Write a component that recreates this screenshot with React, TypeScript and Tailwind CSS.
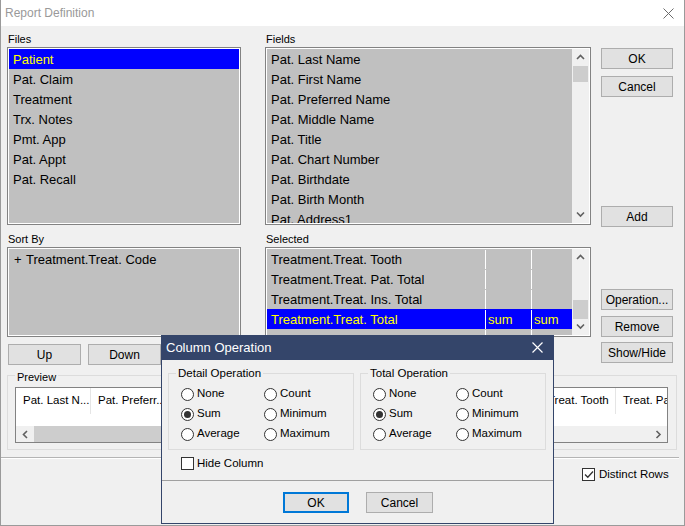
import React from "react";

const files = ["Patient", "Pat. Claim", "Treatment", "Trx. Notes", "Pmt. App", "Pat. Appt", "Pat. Recall"];

const fields = [
	"Pat. Last Name",
	"Pat. First Name",
	"Pat. Preferred Name",
	"Pat. Middle Name",
	"Pat. Title",
	"Pat. Chart Number",
	"Pat. Birthdate",
	"Pat. Birth Month",
	"Pat. Address1",
];

const selected = [
	{ name: "Treatment.Treat. Tooth", detail: "", total: "" },
	{ name: "Treatment.Treat. Pat. Total", detail: "", total: "" },
	{ name: "Treatment.Treat. Ins. Total", detail: "", total: "" },
	{ name: "Treatment.Treat. Total", detail: "sum", total: "sum", active: true },
	{ name: "", detail: "", total: "" },
];

// columns under the dialog are left blank, only the visible ones carry text
const previewCols = [
	{ label: "Pat. Last N...", w: 75 },
	{ label: "Pat. Preferr...", w: 90 },
	{ label: "", w: 90 },
	{ label: "", w: 90 },
	{ label: "", w: 90 },
	{ label: "", w: 90 },
	{ label: "Treat. Tooth", w: 75 },
	{ label: "Treat. Pat. Total", w: 90 },
];

function Chevron({ dir }: { dir: "up" | "down" | "left" | "right" }) {
	const d = {
		up: "M1 5 L4.5 1.5 L8 5",
		down: "M1 1.5 L4.5 5 L8 1.5",
		left: "M5 1 L1.5 4.5 L5 8",
		right: "M1.5 1 L5 4.5 L1.5 8",
	}[dir];
	const vertical = dir === "up" || dir === "down";
	return (
		<svg width={vertical ? 9 : 7} height={vertical ? 7 : 9} viewBox={vertical ? "0 0 9 7" : "0 0 7 9"}>
			<path d={d} fill="none" stroke="#606060" strokeWidth="1.6" />
		</svg>
	);
}

function Btn({ children, className = "" }: { children: React.ReactNode; className?: string }) {
	return (
		<button className={`flex h-[21px] w-[72px] items-center justify-center border border-[#adadad] bg-[#e1e1e1] text-[12px] leading-none ${className}`}>
			{children}
		</button>
	);
}

function Label({ children }: { children: React.ReactNode }) {
	return <div className="h-[15px] pl-px text-[11px] leading-[15px]">{children}</div>;
}

function VScroll({ thumbTop, thumbH }: { thumbTop: number; thumbH: number }) {
	return (
		<div className="relative flex w-[17px] flex-col items-center justify-between bg-[#f0f0f0] py-[5px]">
			<Chevron dir="up" />
			<div className="absolute left-px w-[15px] bg-[#cdcdcd]" style={{ top: thumbTop, height: thumbH }} />
			<Chevron dir="down" />
		</div>
	);
}

function Radio({ label, checked }: { label: string; checked?: boolean }) {
	return (
		<div className="flex h-[20px] items-center">
			<span className="flex h-[13px] w-[13px] items-center justify-center rounded-full border border-[#333333] bg-white">
				{checked && <span className="h-[7px] w-[7px] rounded-full bg-[#333333]" />}
			</span>
			<span className="ml-[3px]">{label}</span>
		</div>
	);
}

function OpGroup({ title }: { title: string }) {
	return (
		<div className="relative h-[77px] w-[186px] border border-[#dcdcdc] pl-[12px] pt-[10px]">
			<span className="absolute -top-[7px] left-[7px] bg-[#f0f0f0] px-[2px] leading-[13px]">{title}</span>
			<div className="grid grid-cols-[83px_1fr]">
				<Radio label="None" />
				<Radio label="Count" />
				<Radio label="Sum" checked />
				<Radio label="Minimum" />
				<Radio label="Average" />
				<Radio label="Maximum" />
			</div>
		</div>
	);
}

function ColumnOperation() {
	return (
		<div className="absolute left-[160px] top-[335px] flex h-[189px] w-[393px] flex-col border border-t-0 border-[#34456a] bg-[#f0f0f0] text-[11.5px]">
			<div className="flex h-[25px] items-center justify-between bg-[#34456a] pl-[4px] pr-[10px] text-[13px] text-white">
				<span>Column Operation</span>
				<svg width="11" height="11" viewBox="0 0 11 11">
					<path d="M0.5 0.5 L10.5 10.5 M10.5 0.5 L0.5 10.5" stroke="#ffffff" strokeWidth="1.2" />
				</svg>
			</div>
			<div className="mt-[13px] flex gap-[6px] pl-[6px]">
				<OpGroup title="Detail Operation" />
				<OpGroup title="Total Operation" />
			</div>
			<div className="mt-[7px] flex h-[13px] items-center pl-[19px]">
				<span className="h-[13px] w-[13px] border border-[#333333] bg-white" />
				<span className="ml-[3px]">Hide Column</span>
			</div>
			<div className="mt-[10px] h-px bg-[#a0a0a0]" />
			<div className="mt-[11px] flex gap-[17px] pl-[121px]">
				<button className="flex h-[21px] w-[66px] items-center justify-center border-2 border-[#0078d7] bg-[#e1e1e1] text-[12px]">OK</button>
				<button className="flex h-[21px] w-[67px] items-center justify-center border border-[#adadad] bg-[#e1e1e1] text-[12px]">Cancel</button>
			</div>
		</div>
	);
}

export default function App() {
	return (
		<div className="relative h-[526px] w-[685px] overflow-hidden border border-t-0 border-[#9a9a9a] bg-[#f0f0f0] font-['Liberation_Sans',Arial,sans-serif] text-black">
			<div className="flex h-[26px] items-center justify-between bg-white pl-[4px] pr-[10px]">
				<span className="text-[12px] text-[#999999]">Report Definition</span>
				<svg width="11" height="11" viewBox="0 0 11 11">
					<path d="M0.5 0.5 L10.5 10.5 M10.5 0.5 L0.5 10.5" stroke="#6b6b6b" strokeWidth="1" />
				</svg>
			</div>

			<div className="pl-[6px] pt-[6px]">
				{/* files / fields */}
				<div className="flex h-[193px] items-start">
					<div className="w-[234px]">
						<Label>Files</Label>
						<div className="h-[178px] border border-[#828282] bg-white p-px">
							<div className="h-full bg-[#c0c0c0]">
								{files.map((f, i) => (
									<div key={f} className={`flex h-[20px] items-center pl-[4px] pt-px text-[13px] ${i === 0 ? "bg-[#0000ff] text-[#ffff00]" : ""}`}>
										{f}
									</div>
								))}
							</div>
						</div>
					</div>
					<div className="ml-[24px] w-[326px]">
						<Label>Fields</Label>
						<div className="h-[178px] border border-[#828282] bg-white p-px">
							<div className="flex h-full bg-[#c0c0c0]">
								<div className="flex-1 overflow-hidden">
									{fields.map((f) => (
										<div key={f} className="flex h-[20px] items-center pl-[4px] pt-px text-[13px]">
											{f}
										</div>
									))}
								</div>
								<VScroll thumbTop={17} thumbH={16} />
							</div>
						</div>
					</div>
					<div className="ml-[10px] flex w-[72px] flex-col">
						<Btn className="mt-[16px]">OK</Btn>
						<Btn className="mt-[7px]">Cancel</Btn>
						<Btn className="mt-[109px]">Add</Btn>
					</div>
				</div>

				{/* sort by / selected */}
				<div className="mt-[7px] flex items-start">
					<div className="w-[234px]">
						<Label>Sort By</Label>
						<div className="h-[90px] border border-[#828282] bg-white p-px">
							<div className="h-full bg-[#c0c0c0]">
								<div className="flex h-[20px] items-center pl-[5px] pt-px text-[13px]">
									<span className="w-[12px]">+</span>
									<span>Treatment.Treat. Code</span>
								</div>
							</div>
						</div>
						<div className="mt-[7px] flex">
							<Btn className="ml-px w-[73px]">Up</Btn>
							<Btn className="ml-[7px] w-[73px]">Down</Btn>
						</div>
					</div>
					<div className="ml-[24px] w-[326px]">
						<Label>Selected</Label>
						<div className="h-[90px] border border-[#828282] bg-white p-px">
							<div className="flex h-full bg-[#c0c0c0]">
								<div className="flex-1 overflow-hidden">
									{selected.map((r, i) => (
										<div key={i} className={`flex h-[20px] pt-px text-[13px] ${r.active ? "bg-[#0000ff] text-[#ffff00]" : ""}`}>
											<div className="flex w-[218px] items-center pl-[4px]">{r.name}</div>
											<div className="flex w-[46px] items-center border-l border-white pl-[2px]">{r.detail}</div>
											<div className="flex flex-1 items-center border-l border-white pl-[2px]">{r.total}</div>
										</div>
									))}
								</div>
								<VScroll thumbTop={51} thumbH={19} />
							</div>
						</div>
					</div>
					<div className="ml-[10px] flex w-[72px] flex-col">
						<Btn className="mt-[57px]">Operation...</Btn>
						<Btn className="mt-[6px]">Remove</Btn>
						<Btn className="mt-[5px]">Show/Hide</Btn>
					</div>
				</div>

				{/* preview */}
				<div className="relative mt-[10px] h-[75px] w-[670px] border border-[#dcdcdc] pl-[7px] pt-[11px]">
					<span className="absolute -top-[5px] left-[7px] bg-[#f0f0f0] px-[2px] text-[11px] leading-[13px]">Preview</span>
					<div className="flex h-[56px] w-[653px] flex-col border border-[#828282] bg-white">
						<div className="flex h-[26px] overflow-hidden text-[11.5px]">
							{previewCols.map((c, i) => (
								<div key={i} className="flex shrink-0 items-center whitespace-nowrap border-r border-[#e5e5e5] pl-[7px]" style={{ width: c.w }}>
									{c.label}
								</div>
							))}
						</div>
						<div className="flex-1" />
						<div className="flex h-[16px] items-center bg-[#f0f0f0]">
							<div className="flex w-[18px] justify-center">
								<Chevron dir="left" />
							</div>
							<div className="h-full w-[420px] bg-[#cdcdcd]" />
							<div className="flex-1" />
							<div className="flex w-[18px] justify-center">
								<Chevron dir="right" />
							</div>
						</div>
					</div>
				</div>
			</div>

			<div className="mt-[7px] h-[2px] w-[678px] border-t border-[#b4b4b4] border-b border-b-white" />

			<div className="mt-[9px] flex h-[13px] items-center pl-[581px] text-[11.5px]">
				<span className="flex h-[13px] w-[13px] items-center justify-center border border-[#333333] bg-white">
					<svg width="10" height="9" viewBox="0 0 10 9">
						<path d="M1 4.5 L3.8 7.3 L9 1.5" fill="none" stroke="#333333" strokeWidth="1.3" />
					</svg>
				</span>
				<span className="ml-[4px]">Distinct Rows</span>
			</div>

			<ColumnOperation />
		</div>
	);
}
